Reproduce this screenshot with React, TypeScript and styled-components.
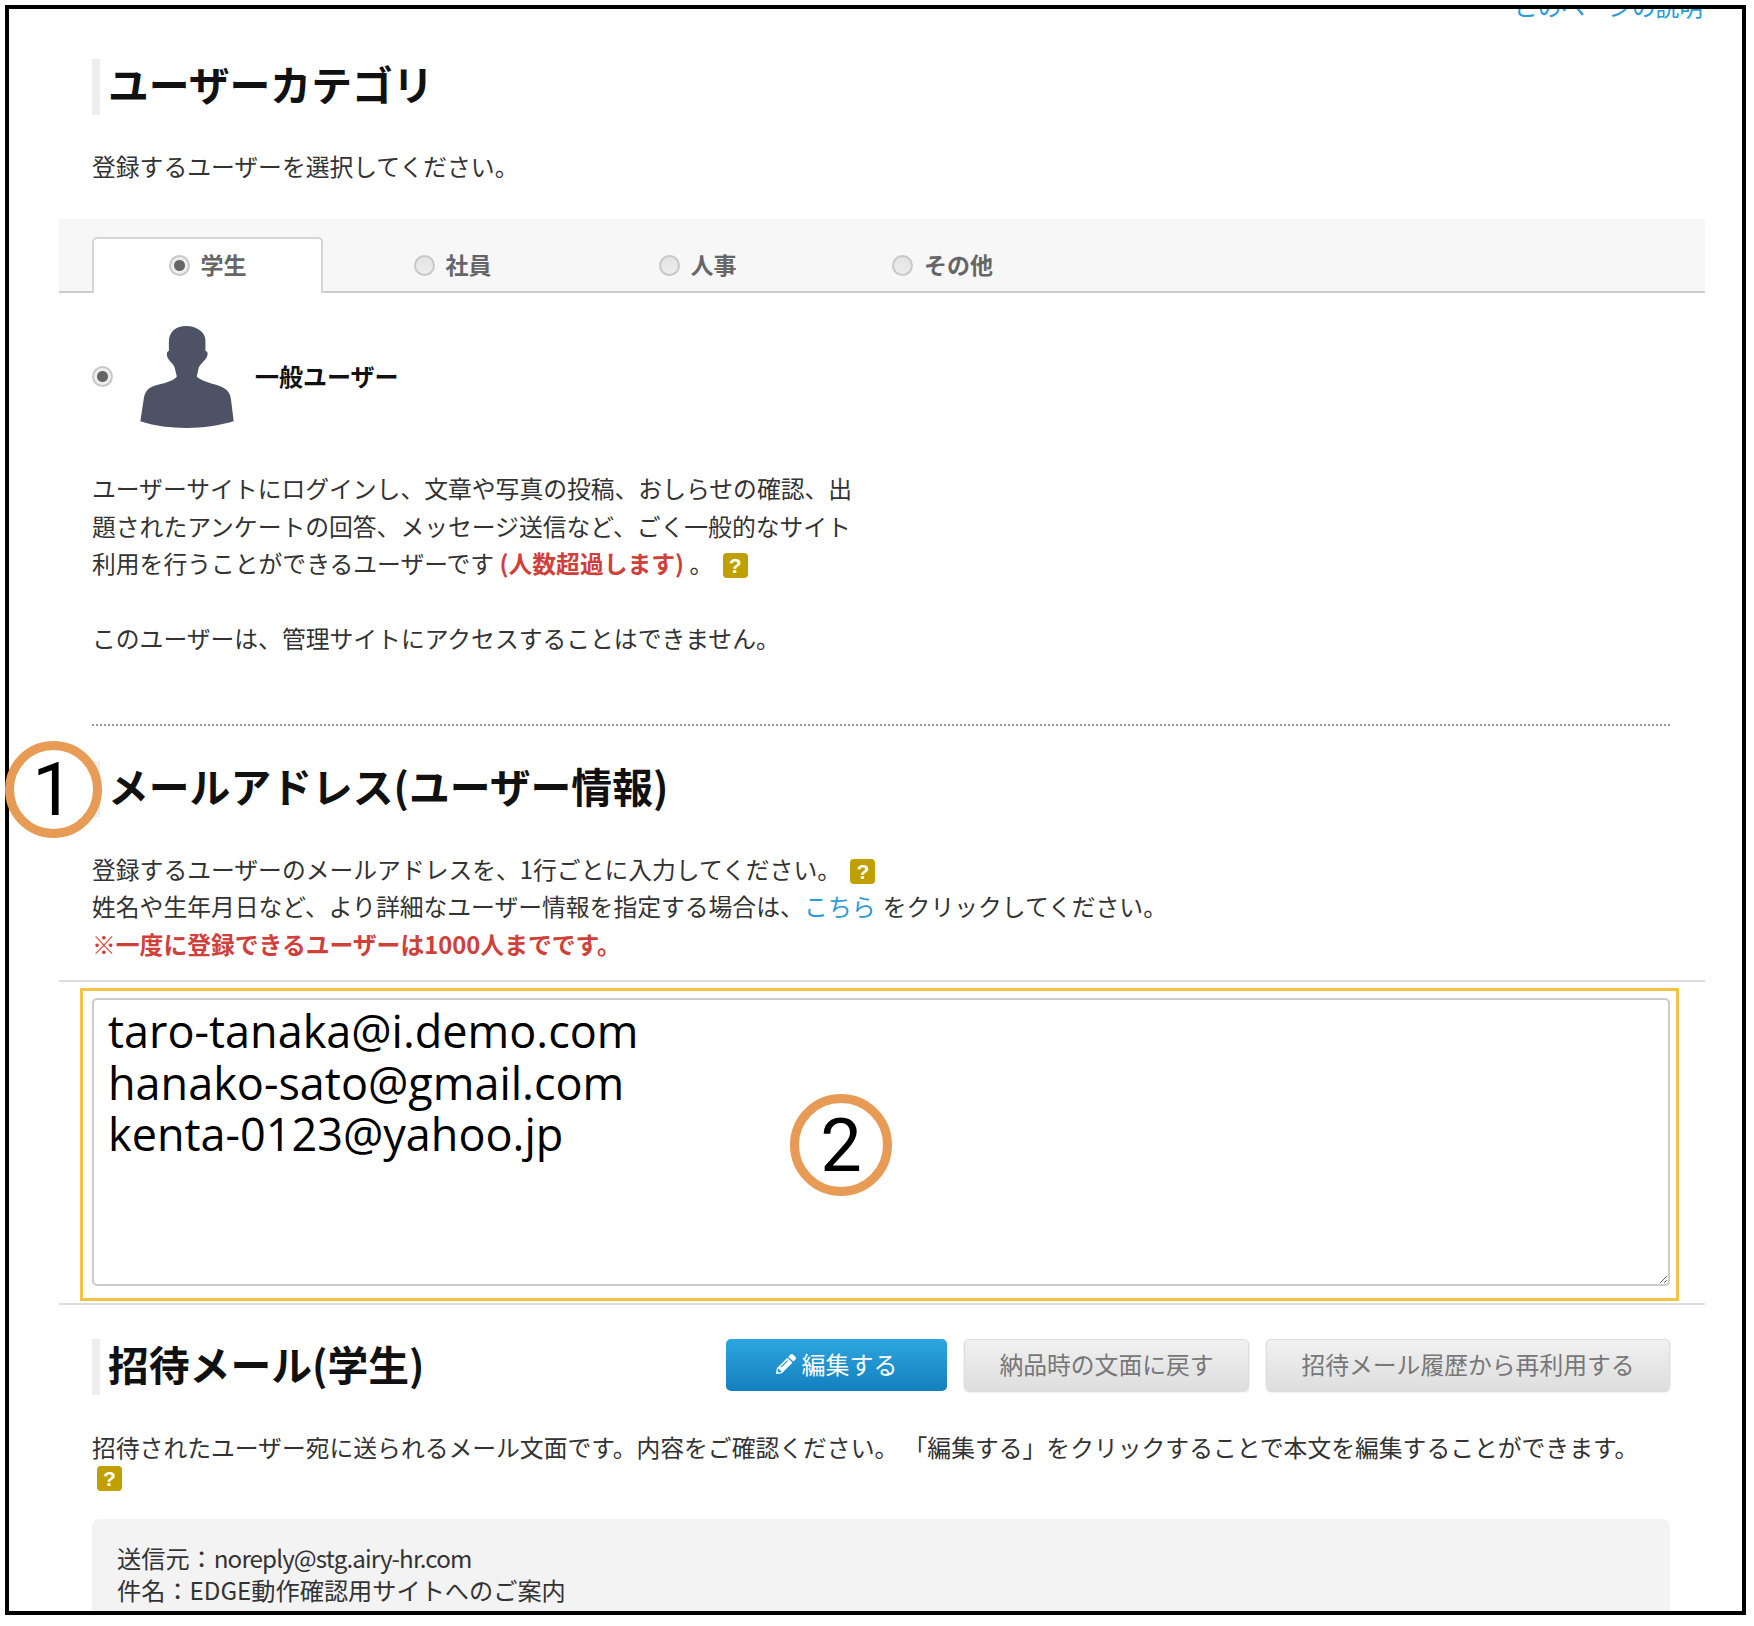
import React from "react";
import styled, { createGlobalStyle } from "styled-components";
import { FaPencilAlt } from "react-icons/fa";

const CJK = `"Noto Sans CJK JP", "Liberation Sans", sans-serif`;

const tabs = [
  { label: "学生", checked: true },
  { label: "社員", checked: false },
  { label: "人事", checked: false },
  { label: "その他", checked: false },
];

const App = () => {
  return (
    <Page>
      <GlobalStyle />
      <Frame>
        <TopRow>
          <TopLink>このページの説明</TopLink>
        </TopRow>
        <Heading $top={41}>ユーザーカテゴリ</Heading>
        <Text $top={32}>登録するユーザーを選択してください。</Text>
        <TabBar>
          {tabs.map((tab) => (
            <Tab key={tab.label} $active={tab.checked}>
              <Radio $checked={tab.checked} />
              {tab.label}
            </Tab>
          ))}
        </TabBar>
        <UserRow>
          <Radio $checked />
          <PersonIcon viewBox="180 318 285 307">
            <path d="M320 318C290 318 268 335 268 365L268 393C260 395 261 405 265 415C270 425 280 430 285 442L292 470C285 480 260 490 235 495C205 502 195 515 192 540L182 605C230 620 270 625 322 625C370 625 420 618 463 605L455 540C452 515 440 505 410 495C385 488 360 480 352 470L358 442C365 430 375 425 382 412C386 402 386 395 378 393L378 360C378 340 355 318 320 318Z" />
          </PersonIcon>
          <UserLabel>一般ユーザー</UserLabel>
        </UserRow>
        <Text $top={41.5}>
          ユーザーサイトにログインし、文章や写真の投稿、おしらせの確認、出
          <br />
          題されたアンケートの回答、メッセージ送信など、ごく一般的なサイト
          <br />
          利用を行うことができるユーザーです <Warn>(人数超過します)</Warn> 。 <Help>?</Help>
          <br />
          <br />
          このユーザーは、管理サイトにアクセスすることはできません。
        </Text>
        <DottedRule />
        <Heading $top={35}>メールアドレス(ユーザー情報)</Heading>
        <Text $top={33}>
          登録するユーザーのメールアドレスを、1行ごとに入力してください。 <Help>?</Help>
          <br />
          姓名や生年月日など、より詳細なユーザー情報を指定する場合は、 <TextLink>こちら</TextLink>{" "}
          をクリックしてください。
          <br />
          <Warn>※一度に登録できるユーザーは1000人までです。</Warn>
        </Text>
        <Rule $top={18} />
        <Highlight>
          <EmailBox>
            taro-tanaka@i.demo.com
            <br />
            hanako-sato@gmail.com
            <br />
            kenta-0123@yahoo.jp
          </EmailBox>
        </Highlight>
        <Rule $top={2} />
        <HeadingRow>
          <Heading $top={0}>招待メール(学生)</Heading>
          <ButtonGroup>
            <PrimaryButton>
              <FaPencilAlt size={20} />
              編集する
            </PrimaryButton>
            <GreyButton $width={285}>納品時の文面に戻す</GreyButton>
            <GreyButton $width={404}>招待メール履歴から再利用する</GreyButton>
          </ButtonGroup>
        </HeadingRow>
        <Text $top={33}>
          招待されたユーザー宛に送られるメール文面です。内容をご確認ください。 「編集する」をクリックすることで本文を編集することができます。
          <Help $block>?</Help>
        </Text>
        <MailBox>
          送信元：<MailAddress>noreply@stg.airy-hr.com</MailAddress>
          <br />
          件名：EDGE動作確認用サイトへのご案内
        </MailBox>
      </Frame>
      <Callout $x={53} $y={789} $size={97} $font={74}>
        1
      </Callout>
      <Callout $x={841} $y={1145} $size={102} $font={74}>
        2
      </Callout>
    </Page>
  );
};

const GlobalStyle = createGlobalStyle`
  html, body {
    background: #fff;
    margin: 0;
    overflow: hidden;
  }
`;

const Page = styled.div`
  height: 1626px;
  position: relative;
  width: 1754px;
`;

const Frame = styled.div`
  background: #fff;
  border: 4px solid #000;
  box-sizing: border-box;
  color: #333;
  font-family: ${CJK};
  height: 1610px;
  margin-left: 5px;
  overflow: hidden;
  padding: 0 37px 0 83px;
  position: relative;
  top: 5px;
  width: 1741px;
`;

const TopRow = styled.div`
  display: flex;
  height: 24px;
  justify-content: flex-end;
  margin: -15px 2px 0 0;
`;

const TopLink = styled.a`
  color: #2a9bd8;
  font-size: 23.7px;
  line-height: 24px;
`;

const Heading = styled.h2<{ $top: number }>`
  border-left: 8px solid #eee;
  box-sizing: border-box;
  color: #111;
  font-size: 40.8px;
  font-weight: 700;
  height: 56px;
  line-height: 50px;
  margin: ${(p) => p.$top}px 0 0;
  padding-left: 8px;
  white-space: nowrap;
`;

const Text = styled.p<{ $top: number }>`
  font-size: 23.8px;
  line-height: 37.5px;
  margin: ${(p) => p.$top}px 0 0;
  white-space: nowrap;
`;

const TabBar = styled.div`
  background: #f7f7f7;
  border-bottom: 2px solid #ccc;
  box-sizing: border-box;
  display: flex;
  gap: 14px;
  height: 74px;
  margin: 34px 0 0 -33px;
  padding: 18px 0 0 33px;
`;

const Tab = styled.div<{ $active?: boolean }>`
  align-items: center;
  background: ${(p) => (p.$active ? "#fff" : "transparent")};
  border: 2px solid ${(p) => (p.$active ? "#d5d5d5" : "transparent")};
  border-bottom: 0;
  border-radius: 5px 5px 0 0;
  box-sizing: border-box;
  color: #666;
  display: flex;
  font-size: 23px;
  font-weight: 700;
  gap: 11px;
  height: 56px;
  justify-content: center;
  padding-bottom: 3px;
  width: 231px;
`;

const Radio = styled.span<{ $checked?: boolean }>`
  background: ${(p) =>
    p.$checked
      ? "radial-gradient(circle, #666 0 5px, #eee 6px)"
      : "linear-gradient(#e4e4e4, #ececec)"};
  border: 2px solid #c8c8c8;
  border-radius: 50%;
  box-sizing: border-box;
  flex: none;
  height: 21px;
  margin-top: 2px;
  width: 21px;
`;

const UserRow = styled.div`
  align-items: center;
  display: flex;
  margin-top: 33px;
  ${Radio} {
    margin-top: 0;
  }
`;

const PersonIcon = styled.svg`
  fill: #4d5365;
  flex: none;
  height: 102px;
  margin-left: 26px;
  width: 96px;
`;

const UserLabel = styled.span`
  color: #111;
  font-size: 24px;
  font-weight: 700;
  margin: 0 0 2px 20px;
`;

const Warn = styled.span`
  color: #d0403a;
  font-weight: 700;
`;

const TextLink = styled.a`
  color: #2a9bd8;
  margin: 0 2px 0 -5px;
`;

const Help = styled.span<{ $block?: boolean }>`
  align-items: center;
  background: #c09f00;
  border-radius: 4px;
  color: #fff;
  display: ${(p) => (p.$block ? "flex" : "inline-flex")};
  font-family: "Liberation Sans", sans-serif;
  font-size: 21px;
  font-weight: 700;
  height: 25px;
  justify-content: center;
  line-height: 1;
  margin: ${(p) => (p.$block ? "0 0 0 5px" : "0 0 0 4px")};
  vertical-align: 0;
  width: 25px;
`;

const DottedRule = styled.div`
  border-top: 2px dotted #999;
  margin: 67px 35px 0 0;
`;

const Rule = styled.div<{ $top: number }>`
  background: #ddd;
  height: 2px;
  margin: ${(p) => p.$top}px 0 0 -33px;
`;

const Highlight = styled.div`
  border: 3px solid #f6c244;
  box-sizing: border-box;
  height: 313px;
  margin: 6px 26px 0 -12px;
  padding: 7px 6px 12px 9px;
`;

const EmailBox = styled.div`
  border: 2px solid #ccc;
  border-radius: 5px;
  box-sizing: border-box;
  color: #000;
  font-family: "Open Sans", sans-serif;
  font-size: 45px;
  height: 288px;
  line-height: 51.5px;
  overflow: auto;
  padding: 5px 14px;
  resize: vertical;
`;

const HeadingRow = styled.div`
  align-items: flex-start;
  display: flex;
  justify-content: space-between;
  margin: 34px 35px 0 0;
`;

const ButtonGroup = styled.div`
  display: flex;
  gap: 17px;
`;

const PrimaryButton = styled.button`
  align-items: center;
  background: linear-gradient(#2ea6e0, #137fbd);
  border: 0;
  border-radius: 5px;
  box-sizing: border-box;
  color: #fff;
  display: flex;
  font-family: ${CJK};
  font-size: 24px;
  gap: 6px;
  height: 52px;
  justify-content: center;
  padding: 0 0 3px;
  width: 221px;
`;

const GreyButton = styled.button<{ $width: number }>`
  background: linear-gradient(#f1f1f1, #dedede);
  border: 1px solid #ddd;
  border-radius: 5px;
  box-shadow: 0 1px 2px rgba(0, 0, 0, 0.18);
  box-sizing: border-box;
  color: #777;
  font-family: ${CJK};
  font-size: 23.8px;
  height: 52px;
  padding: 0 0 3px;
  width: ${(p) => p.$width}px;
`;

const MailBox = styled.div`
  background: #f3f3f3;
  border-radius: 8px;
  font-size: 24.2px;
  height: 200px;
  line-height: 32px;
  margin: 28px 35px 0 0;
  padding: 23px 25px;
`;

const MailAddress = styled.span`
  letter-spacing: -0.9px;
`;

const Callout = styled.div<{ $x: number; $y: number; $size: number; $font: number }>`
  align-items: center;
  background: #fff;
  border: 9px solid #e89b55;
  border-radius: 50%;
  box-sizing: border-box;
  color: #000;
  display: flex;
  font-family: Roboto, sans-serif;
  font-size: ${(p) => p.$font}px;
  height: ${(p) => p.$size}px;
  justify-content: center;
  left: ${(p) => p.$x - p.$size / 2}px;
  position: absolute;
  top: ${(p) => p.$y - p.$size / 2}px;
  width: ${(p) => p.$size}px;
`;

export default App;
